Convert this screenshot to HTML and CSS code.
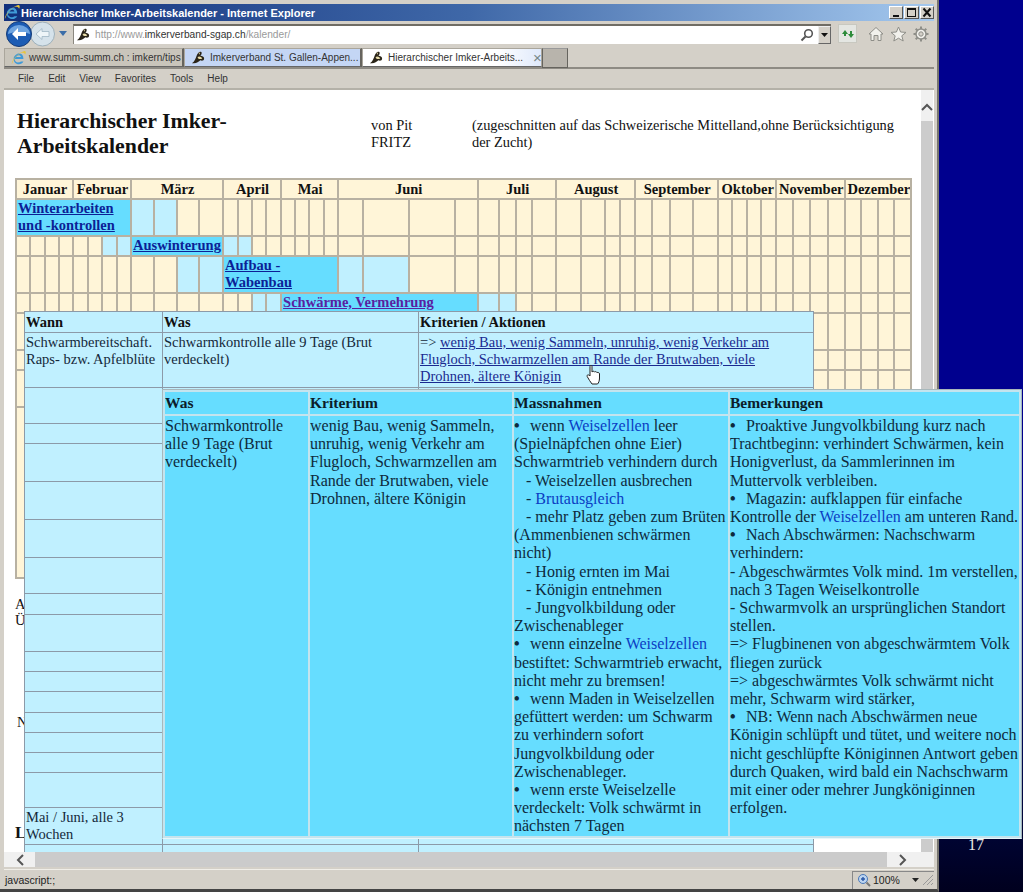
FILE: index.html
```html
<!DOCTYPE html>
<html lang="de">
<head>
  <meta charset="UTF-8">
  <title>Hierarchischer Imker-Arbeitskalender - Internet Explorer</title>
  <link rel="stylesheet" href="styles.css">
</head>
<body>
  <svg class="defs" width="0" height="0">
    <symbol id="bee" viewBox="0 0 16 16">
      <path d="M1 14 C4 12 5 9 6 6 C7 3 9 1 11 2 C12 3 11 5 10 6 C12 6 14 7 14 9 C14 11 12 12 10 11 C8 13 5 15 1 14Z" fill="#2a2418"/>
      <path d="M7 8 C8 6 11 7 12 9 C10 10 8 10 7 8Z" fill="#e8dca8"/>
      <path d="M8 3 C9 2 10 3 9 5Z" fill="#e8dca8"/>
    </symbol>
    <symbol id="ie" viewBox="0 0 18 18">
      <path d="M4 10 H14 C14 6 12 4 9 4 C6 4 3 7 3 10 C3 14 6 16 9 16 C11 16 13 15 14 13 H11 C10 14 9 14 8 14 C6 14 4 12 4 10Z M6 8 C6 7 8 6 9 6 C10 6 11 7 11 8Z" fill="#3f9ad8" fill-rule="evenodd"/>
      <path d="M1 16 C0 12 8 3 15 1 C17 1 17 3 16 5 C15 3 14 3 12 3 C7 5 3 10 1 16Z" fill="#e8c53a"/>
    </symbol>
  </svg>

  <div class="window">
    <div class="titlebar">
      <svg class="title-icon" width="17" height="17"><use href="#ie"/></svg>
      <span class="title-text">Hierarchischer Imker-Arbeitskalender - Internet Explorer</span>
      <div class="win-btns">
        <span class="win-btn"><svg width="12" height="11"><rect x="3" y="8" width="6" height="2" fill="#111"/></svg></span>
        <span class="win-btn"><svg width="12" height="11"><rect x="2.5" y="1.5" width="8" height="8" fill="none" stroke="#111"/><rect x="2" y="1" width="9" height="2" fill="#111"/></svg></span>
        <span class="win-btn"><svg width="12" height="11"><path d="M2.5 1.5 L9.5 9.5 M9.5 1.5 L2.5 9.5" stroke="#111" stroke-width="2"/></svg></span>
      </div>
    </div>

    <div class="addressbar">
      <svg class="nav-btn" width="50" height="26" viewBox="0 0 50 26">
        <circle cx="37.5" cy="13" r="12" fill="#d5e2ea" stroke="#9eb0ba"/>
        <path d="M31 13 L37 7.5 V10.5 H44 V15.5 H37 V18.5Z" fill="#eef5f8" stroke="#a0b6c4" stroke-width="0.8"/>
        <circle cx="14" cy="13" r="12.5" fill="#1c5cb4" stroke="#123a78"/>
        <path d="M3 13 A11 9 0 0 1 25 13 A14 5 0 0 0 3 13Z" fill="#6ea4e0"/>
        <path d="M7 13 L13 7 V11 H21 V15 H13 V19Z" fill="#fff"/>
      </svg>
      <svg class="nav-drop" width="10" height="7"><path d="M1 1 H9 L5 6Z" fill="#3c6ea8"/></svg>
      <div class="address">
        <svg width="15" height="15"><use href="#bee"/></svg>
        <span class="url">http://www.<b>imkerverband-sgap.ch</b>/kalender/</span>
        <svg class="search-icon" width="14" height="14" viewBox="0 0 14 14"><circle cx="8.5" cy="5.5" r="3.8" fill="none" stroke="#555" stroke-width="1.6"/><path d="M5.5 8.5 L1.5 12.5" stroke="#555" stroke-width="2"/></svg>
        <span class="address-drop"><svg width="7" height="4"><path d="M0 0 H7 L3.5 4Z" fill="#111"/></svg></span>
      </div>
      <span class="compat"><svg width="14" height="14" viewBox="0 0 14 14"><path d="M1 7 L4 3 L7 7 H5 V9 H3 V7Z M13 7 L10 11 L7 7 H9 V4 H11 V7Z" fill="#2e8c3c"/></svg></span>
      <div class="tools">
        <svg width="16" height="16" viewBox="0 0 16 16"><path d="M1 8 L8 1.5 L15 8 L13 8 V14.5 H10 V9.5 H6 V14.5 H3 V8Z" fill="#f2f1ec" stroke="#8e8e88"/></svg>
        <svg width="17" height="16" viewBox="0 0 17 16"><path d="M8.5 1 L10.6 6 L16 6.4 L11.8 9.8 L13.2 15 L8.5 12.2 L3.8 15 L5.2 9.8 L1 6.4 L6.4 6Z" fill="#f2f1ec" stroke="#8e8e88"/></svg>
        <svg width="16" height="16" viewBox="0 0 16 16"><circle cx="8" cy="8" r="5" fill="#f2f1ec" stroke="#8e8e88" stroke-width="1.5"/><circle cx="8" cy="8" r="2.2" fill="#d4d0c8" stroke="#8e8e88"/><path d="M8 0.5 V3 M8 13 V15.5 M0.5 8 H3 M13 8 H15.5 M2.7 2.7 L4.4 4.4 M11.6 11.6 L13.3 13.3 M2.7 13.3 L4.4 11.6 M11.6 4.4 L13.3 2.7" stroke="#8e8e88" stroke-width="2"/></svg>
      </div>
    </div>

    <div class="tabbar">
      <div class="tab tab-old"><svg width="16" height="16"><use href="#ie"/></svg>www.summ-summ.ch : imkern/tips</div>
      <div class="tab tab-other"><svg width="15" height="15"><use href="#bee"/></svg>Imkerverband St. Gallen-Appen...</div>
      <div class="tab tab-active"><svg width="15" height="15"><use href="#bee"/></svg>Hierarchischer Imker-Arbeits...<span class="tab-close">×</span></div>
      <div class="tab-new"></div>
    </div>

    <div class="menubar">
      <span>File</span><span>Edit</span><span>View</span><span>Favorites</span><span>Tools</span><span>Help</span>
    </div>

    <div class="viewport">
      <div class="view-row">
        <div class="page">
          <div class="page-head">
            <h1>Hierarchischer Imker-<br>Arbeitskalender</h1>
            <div class="author">von Pit<br>FRITZ</div>
            <div class="note">(zugeschnitten auf das Schweizerische Mittelland,ohne Berücksichtigung<br>der Zucht)</div>
          </div>

          <table class="calendar">
            <colgroup>
              <col width="14"><col width="15"><col width="14"><col width="14">
              <col width="15"><col width="14"><col width="15"><col width="14">
              <col width="23"><col width="23"><col width="22"><col width="24">
              <col width="15"><col width="14"><col width="14"><col width="15">
              <col width="14"><col width="14"><col width="15"><col width="14">
              <col width="25"><col width="46"><col width="46"><col width="23">
              <col width="21"><col width="17"><col width="16"><col width="24">
              <col width="25"><col width="24"><col width="15"><col width="15">
              <col width="17"><col width="18"><col width="23"><col width="25">
              <col width="14"><col width="15"><col width="14"><col width="15">
              <col width="17"><col width="17"><col width="18"><col width="17">
              <col width="16"><col width="17"><col width="16"><col width="17">
            </colgroup>
            <tr class="months">
              <th colspan="4">Januar</th><th colspan="4">Februar</th><th colspan="4">März</th><th colspan="4">April</th><th colspan="4">Mai</th><th colspan="4">Juni</th><th colspan="4">Juli</th><th colspan="4">August</th><th colspan="4">September</th><th colspan="4">Oktober</th><th colspan="4">November</th><th colspan="4">Dezember</th>
            </tr>
            <tr class="tall">
              <td colspan="8" class="phase"><a href="#">Winterarbeiten<br>und -kontrollen</a></td>
              <td class="soon"></td><td class="soon"></td><td></td><td></td>
              <td></td><td></td><td></td><td></td><td></td><td></td><td></td><td></td><td></td><td></td><td></td><td></td>
              <td></td><td></td><td></td><td></td><td></td><td></td><td></td><td></td><td></td><td></td><td></td><td></td>
              <td></td><td></td><td></td><td></td><td></td><td></td><td></td><td></td><td></td><td></td><td></td><td></td>
            </tr>
            <tr class="short">
              <td></td><td></td><td></td><td></td><td></td><td></td><td class="soon"></td><td class="soon"></td>
              <td colspan="4" class="phase"><a href="#">Auswinterung</a></td>
              <td class="soon"></td><td class="soon"></td><td></td><td></td>
              <td></td><td></td><td></td><td></td><td></td><td></td><td></td><td></td><td></td><td></td><td></td><td></td>
              <td></td><td></td><td></td><td></td><td></td><td></td><td></td><td></td><td></td><td></td><td></td><td></td>
              <td></td><td></td><td></td><td></td><td></td><td></td><td></td><td></td>
            </tr>
            <tr class="tall">
              <td></td><td></td><td></td><td></td><td></td><td></td><td></td><td></td>
              <td></td><td></td><td class="soon"></td><td class="soon"></td>
              <td colspan="8" class="phase"><a href="#">Aufbau -<br>Wabenbau</a></td>
              <td class="soon"></td><td class="soon"></td><td></td><td></td>
              <td></td><td></td><td></td><td></td><td></td><td></td><td></td><td></td><td></td><td></td><td></td><td></td>
              <td></td><td></td><td></td><td></td><td></td><td></td><td></td><td></td><td></td><td></td><td></td><td></td>
            </tr>
            <tr class="short">
              <td></td><td></td><td></td><td></td><td></td><td></td><td></td><td></td>
              <td></td><td></td><td></td><td></td><td></td><td></td><td class="soon"></td><td class="soon"></td>
              <td colspan="8" class="phase"><a href="#" class="visited">Schwärme, Vermehrung</a></td>
              <td class="soon"></td><td class="soon"></td><td></td><td></td>
              <td></td><td></td><td></td><td></td><td></td><td></td><td></td><td></td><td></td><td></td><td></td><td></td>
              <td></td><td></td><td></td><td></td><td></td><td></td><td></td><td></td>
            </tr>
            <tr class="tall">
              <td colspan="40"></td><td></td><td></td><td></td><td></td><td></td><td></td><td></td><td></td>
            </tr>
            <tr class="short">
              <td colspan="40"></td><td></td><td></td><td></td><td></td><td></td><td></td><td></td><td></td>
            </tr>
            <tr class="tall">
              <td colspan="40"></td><td></td><td></td><td></td><td></td><td></td><td></td><td></td><td></td>
            </tr>
            <tr class="rest"><td colspan="48"></td></tr>
          </table>

          <p class="after-a">A<br>Ü</p>
          <p class="after-n">N</p>
          <p class="after-l">L</p>

          <div class="popup-when">
            <table>
              <tr class="head"><th class="c-when">Wann</th><th class="c-what">Was</th><th>Kriterien / Aktionen</th></tr>
              <tr class="r53">
                <td>Schwarmbereitschaft.<br>Raps- bzw. Apfelblüte</td>
                <td>Schwarmkontrolle alle 9 Tage (Brut<br>verdeckelt)</td>
                <td>=&gt; <a href="#">wenig Bau, wenig Sammeln, unruhig, wenig Verkehr am<br>Flugloch, Schwarmzellen am Rande der Brutwaben, viele<br>Drohnen, ältere Königin</a></td>
              </tr>
              <tr class="r36"><td></td><td></td><td></td></tr>
              <tr class="r20"><td></td><td></td><td></td></tr>
              <tr class="r38"><td></td><td></td><td></td></tr>
              <tr class="r38"><td></td><td></td><td></td></tr>
              <tr class="r38"><td></td><td></td><td></td></tr>
              <tr class="r36"><td></td><td></td><td></td></tr>
              <tr class="r21"><td></td><td></td><td></td></tr>
              <tr class="r37"><td></td><td></td><td></td></tr>
              <tr class="r20"><td></td><td></td><td></td></tr>
              <tr class="r20"><td></td><td></td><td></td></tr>
              <tr class="r21"><td></td><td></td><td></td></tr>
              <tr class="r20"><td></td><td></td><td></td></tr>
              <tr class="r20"><td></td><td></td><td></td></tr>
              <tr class="r20"><td></td><td></td><td></td></tr>
              <tr class="r34"><td></td><td></td><td></td></tr>
              <tr class="r37"><td>Mai / Juni, alle 3<br>Wochen</td><td></td><td></td></tr>
              <tr class="r36"><td></td><td></td><td></td></tr>
            </table>
          </div>
        </div>
        <div class="vscroll">
          <span class="v-arrow"><svg width="12" height="8"><path d="M1 7 L6 2 L11 7" fill="none" stroke="#555" stroke-width="2"/></svg></span>
        </div>
      </div>
      <div class="hscroll">
        <span class="h-arrow"><svg width="8" height="12"><path d="M7 1 L2 6 L7 11" fill="none" stroke="#555" stroke-width="2"/></svg></span>
        <span class="h-track"></span>
        <span class="h-arrow"><svg width="8" height="12"><path d="M1 1 L6 6 L1 11" fill="none" stroke="#555" stroke-width="2"/></svg></span>
      </div>
    </div>

    <div class="statusbar">
      <span class="status-text">javascript:;</span>
      <div class="zoom">
        <svg width="14" height="14" viewBox="0 0 14 14"><circle cx="6" cy="6" r="4.5" fill="#bcd4f0" stroke="#4a78b8"/><path d="M4 6 H8 M6 4 V8" stroke="#2a58a8" stroke-width="1.4"/><path d="M9.5 9.5 L13 13" stroke="#777" stroke-width="2"/></svg>
        <span>100%</span>
        <svg class="zoom-drop" width="7" height="4"><path d="M0 0 H7 L3.5 4Z" fill="#222"/></svg>
        <svg class="grip" width="12" height="12"><path d="M1 11 L11 1 M5 11 L11 5 M9 11 L11 9" stroke="#999"/></svg>
      </div>
    </div>
  </div>

  <span class="slide-no">17</span>

  <svg class="hand" width="15" height="21" viewBox="0 0 15 21">
    <path d="M4 10 V2.5 C4 1 6 1 6 2.5 V8 C7 7 8 7 8.5 8 C9.5 7.3 10.5 7.6 11 8.6 C12 8 13.5 8.6 13.5 10 V14 C13.5 17 12.5 19 11.5 20 H6 C4.5 18 2.5 15 1.2 12.5 C0.5 11 2.4 10 4 12Z" fill="#fff" stroke="#222" stroke-width="1"/>
  </svg>

  <div class="popup-detail">
    <table>
      <tr class="head">
        <th class="d-what">Was</th><th class="d-crit">Kriterium</th><th class="d-do">Massnahmen</th><th>Bemerkungen</th>
      </tr>
      <tr>
        <td>Schwarmkontrolle<br>alle 9 Tage (Brut<br>verdeckelt)</td>
        <td>wenig Bau, wenig Sammeln,<br>unruhig, wenig Verkehr am<br>Flugloch, Schwarmzellen am<br>Rande der Brutwaben, viele<br>Drohnen, ältere Königin</td>
        <td><span class="dot">•</span>wenn <a href="#">Weiselzellen</a> leer<br>(Spielnäpfchen ohne Eier)<br>Schwarmtrieb verhindern durch<br>&nbsp;&nbsp; - Weiselzellen ausbrechen<br>&nbsp;&nbsp; - <a href="#">Brutausgleich</a><br>&nbsp;&nbsp; - mehr Platz geben zum Brüten<br>(Ammenbienen schwärmen<br>nicht)<br>&nbsp;&nbsp; - Honig ernten im Mai<br>&nbsp;&nbsp; - Königin entnehmen<br>&nbsp;&nbsp; - Jungvolkbildung oder<br>Zwischenableger<br><span class="dot">•</span>wenn einzelne <a href="#">Weiselzellen</a><br>bestiftet: Schwarmtrieb erwacht,<br>nicht mehr zu bremsen!<br><span class="dot">•</span>wenn Maden in Weiselzellen<br>gefüttert werden: um Schwarm<br>zu verhindern sofort<br>Jungvolkbildung oder<br>Zwischenableger.<br><span class="dot">•</span>wenn erste Weiselzelle<br>verdeckelt: Volk schwärmt in<br>nächsten 7 Tagen</td>
        <td><span class="dot">•</span>Proaktive Jungvolkbildung kurz nach<br>Trachtbeginn: verhindert Schwärmen, kein<br>Honigverlust, da Sammlerinnen im<br>Muttervolk verbleiben.<br><span class="dot">•</span>Magazin: aufklappen für einfache<br>Kontrolle der <a href="#">Weiselzellen</a> am unteren Rand.<br><span class="dot">•</span>Nach Abschwärmen: Nachschwarm<br>verhindern:<br>- Abgeschwärmtes Volk mind. 1m verstellen,<br>nach 3 Tagen Weiselkontrolle<br>- Schwarmvolk an ursprünglichen Standort<br>stellen.<br>=&gt; Flugbinenen von abgeschwärmtem Volk<br>fliegen zurück<br>=&gt; abgeschwärmtes Volk schwärmt nicht<br>mehr, Schwarm wird stärker,<br><span class="dot">•</span>NB: Wenn nach Abschwärmen neue<br>Königin schlüpft und tütet, und weitere noch<br>nicht geschlüpfte Königinnen Antwort geben<br>durch Quaken, wird bald ein Nachschwarm<br>mit einer oder mehrer Jungköniginnen<br>erfolgen.</td>
      </tr>
    </table>
  </div>
</body>
</html>
```

FILE: styles.css
```css
* {
  box-sizing: border-box;
}
html, body {
  margin: 0;
  height: 892px;
  overflow: hidden;
}
body {
  position: relative;
  background: linear-gradient(#00008e 0, #00008e 60%, #000a50 85%, #00001e 100%);
  font-family: "Liberation Serif", serif;
}
.defs {
  position: absolute;
}

/* browser window */
.window {
  width: 939px;
  height: 892px;
  padding: 4px 3px 0 4px;
  display: flex;
  flex-direction: column;
  background: #d4d0c8;
  border-right: 2px solid #77756f;
  border-bottom: 3px solid #444;
  font-family: "Liberation Sans", sans-serif;
  color: #222;
}
.window svg {
  flex: none;
}
.titlebar {
  height: 17px;
  display: flex;
  align-items: center;
  background: linear-gradient(90deg, #12307c, #3f68a8 50%, #a4c8ee);
  color: #fff;
}
.title-text {
  font-size: 11px;
  font-weight: bold;
  white-space: nowrap;
}
.win-btns {
  margin-left: auto;
  display: flex;
  gap: 1px;
}
.win-btn {
  width: 14.5px;
  height: 13px;
  display: flex;
  align-items: center;
  justify-content: center;
  background: #d4d0c8;
  border: 1px solid;
  border-color: #fff #555 #555 #fff;
}

.addressbar {
  height: 25px;
  display: flex;
  align-items: center;
}
.nav-btn {
  margin-left: 1px;
}
.nav-drop {
  margin-left: 3px;
}
.address {
  width: 758px;
  height: 20px;
  margin-left: 5px;
  display: flex;
  align-items: center;
  gap: 4px;
  padding-left: 2px;
  background: #fff;
  border-top: 2px solid #6f6c64;
  border-left: 1px solid #8a877f;
}
.url {
  font-size: 10.2px;
  color: #9a9a9a;
}
.url b {
  font-weight: normal;
  color: #333;
}
.search-icon {
  margin-left: auto;
}
.address-drop {
  width: 13px;
  height: 18px;
  display: flex;
  align-items: center;
  justify-content: center;
  background: #d4d0c8;
  border: 1px solid;
  border-color: #eee #666 #666 #eee;
}
.compat {
  width: 19px;
  height: 19px;
  margin-left: 7px;
  display: flex;
  align-items: center;
  justify-content: center;
  background: #e4e6e2;
  border: 1px solid #c8c8c0;
}
.tools {
  margin-left: 11px;
  display: flex;
  gap: 6px;
}

.tabbar {
  height: 23px;
  display: flex;
  padding-top: 2px;
  border-bottom: 2px solid #8e8b84;
  font-size: 10px;
}
.tab {
  height: 19px;
  display: flex;
  align-items: center;
  gap: 4px;
  white-space: nowrap;
  color: #333;
  border: 1px solid #aaa69c;
  border-bottom-color: #666;
}
.tab-old {
  width: 180px;
  padding-left: 6px;
  gap: 2px;
  background: #c9c5bb;
  border-right: 2px solid #66645e;
}
.tab-other {
  width: 178px;
  padding-left: 6px;
  background: #c4d6f5;
  border-right: 2px solid #66645e;
}
.tab-active {
  width: 180px;
  padding-left: 6px;
  background: linear-gradient(90deg, #fff, #fff 75%, #dfe9fb);
}
.tab-close {
  margin-left: 6px;
  font-size: 15px;
  line-height: 1;
  color: #788;
}
.tab-new {
  width: 26px;
  height: 20px;
  background: #b8b4ac;
  border: 1px solid #66645e;
  border-top-color: #999;
}

.menubar {
  height: 21px;
  display: flex;
  align-items: center;
  padding-left: 14px;
  gap: 14px;
  font-size: 10px;
  color: #333;
  border-bottom: 2px solid #b4b1a8;
}

.viewport {
  flex: 1;
  min-height: 0;
  display: flex;
  flex-direction: column;
}
.view-row {
  height: 762px;
  display: flex;
}
.page {
  position: relative;
  width: 914px;
  overflow: hidden;
  padding: 19px 0 0 11px;
  background: #fff;
  font-family: "Liberation Serif", serif;
  color: #111;
}
.page-head {
  display: flex;
  font-size: 14.4px;
  line-height: 17px;
}
.page-head h1 {
  width: 354px;
  margin: 0 0 0 2px;
  font-size: 21.8px;
  line-height: 25px;
}
.author {
  width: 101px;
  margin-top: 8px;
}
.note {
  margin-top: 8px;
  white-space: nowrap;
}

/* calendar table */
.calendar {
  margin-top: 19px;
  width: 896px;
  table-layout: fixed;
  border-collapse: collapse;
  background: #fff5d8;
  font-size: 14.5px;
  line-height: 17px;
}
.calendar th, .calendar td {
  padding: 0 0 0 1px;
  border: 2px solid #b8b1a2;
  white-space: nowrap;
  overflow: hidden;
}
.calendar th {
  text-align: center;
  color: #111;
}
.months {
  height: 20px;
}
.tall {
  height: 37px;
}
.short {
  height: 20px;
}
.rest {
  height: 171px;
}
.calendar .phase {
  background: #66ddff;
  font-weight: bold;
  vertical-align: top;
}
.calendar .soon {
  background: #c0f0ff;
}
.calendar a {
  color: #0c1f96;
}
.calendar a.visited {
  color: #5a1ea0;
}
.after-a, .after-n, .after-l {
  margin: 0;
  font-size: 14.5px;
  line-height: 16px;
}
.after-a {
  margin-top: 17px;
}
.after-n {
  margin: 86px 0 0 2px;
}
.after-l {
  margin-top: 95px;
  font-size: 17px;
  font-weight: bold;
}

/* first popup, stays inside the page */
.popup-when {
  position: absolute;
  left: 20px;
  top: 221px;
  width: 790px;
  background: #c0f0ff;
  font-size: 14.5px;
  line-height: 17px;
  color: #14283a;
}
.popup-when table {
  width: 100%;
  table-layout: fixed;
  border-collapse: collapse;
}
.popup-when th, .popup-when td {
  padding: 1px 0 0 1px;
  text-align: left;
  vertical-align: top;
  white-space: nowrap;
  border: 1px solid #8c9aa8;
}
.popup-when th {
  padding-top: 2px;
  color: #111;
}
.popup-when a {
  color: #1a2a90;
}
.c-when {
  width: 138px;
}
.c-what {
  width: 256px;
}
.head {
  height: 21px;
}
.r20 { height: 20px; }
.r21 { height: 21px; }
.r34 { height: 35px; }
.r36 { height: 36px; }
.r37 { height: 37px; }
.r38 { height: 38px; }
.r53 { height: 55px; }

.vscroll {
  flex: 1;
  background: linear-gradient(90deg, #fff 3px, #ccc 3px, #ccc 15px, #fff 15px);
}
.v-arrow {
  display: flex;
  justify-content: center;
  margin-left: 3px;
  width: 12px;
  height: 31px;
  padding-top: 13px;
  background: #f0f0f0;
}
.hscroll {
  height: 15px;
  display: flex;
  align-items: center;
  background: #f0f0f0;
}
.h-arrow {
  width: 31px;
  height: 15px;
  display: flex;
  align-items: center;
  justify-content: center;
}
.h-track {
  width: 852px;
  height: 15px;
  background: #cbcbcb;
}

.statusbar {
  height: 20px;
  margin-top: 2px;
  display: flex;
  align-items: center;
  font-size: 10.5px;
  color: #222;
  border-top: 1px solid #f0eee8;
}
.status-text {
  margin-left: 1px;
}
.zoom {
  margin-left: auto;
  width: 82px;
  height: 18px;
  display: flex;
  align-items: center;
  gap: 2px;
  padding-left: 4px;
  border-left: 1px solid #888;
  border-top: 1px solid #888;
  font-size: 10.5px;
}
.zoom-drop {
  margin-left: 10px;
}
.grip {
  margin-left: auto;
}

/* things lying over the window */
.slide-no {
  position: absolute;
  left: 968px;
  top: 836px;
  font-size: 16px;
  color: #e8e8e8;
}
.hand {
  position: absolute;
  left: 586px;
  top: 364px;
  z-index: 3;
}
.popup-detail {
  position: absolute;
  z-index: 2;
  left: 162px;
  top: 389px;
  width: 860px;
  height: 450px;
  background: #66ddff;
  border: 1px solid #a8b8bc;
  border-bottom-color: #e8f6fa;
  font-size: 16px;
  line-height: 18.2px;
  color: #0e2a3c;
}
.popup-detail table {
  width: 100%;
  height: 100%;
  table-layout: fixed;
  border-collapse: collapse;
}
.popup-detail th, .popup-detail td {
  padding: 1px 0 0 0;
  text-align: left;
  vertical-align: top;
  white-space: nowrap;
  border: 2px solid #c4e4ee;
  overflow: hidden;
}
.popup-detail th {
  height: 24px;
  padding-top: 2px;
  font-size: 15.5px;
  color: #0c1c2a;
}
.popup-detail a {
  color: #0b3ec4;
  text-decoration: none;
}
.dot {
  display: inline-block;
  width: 16px;
  font-weight: bold;
}
.d-what {
  width: 145px;
}
.d-crit {
  width: 204px;
}
.d-do {
  width: 216px;
}
```
